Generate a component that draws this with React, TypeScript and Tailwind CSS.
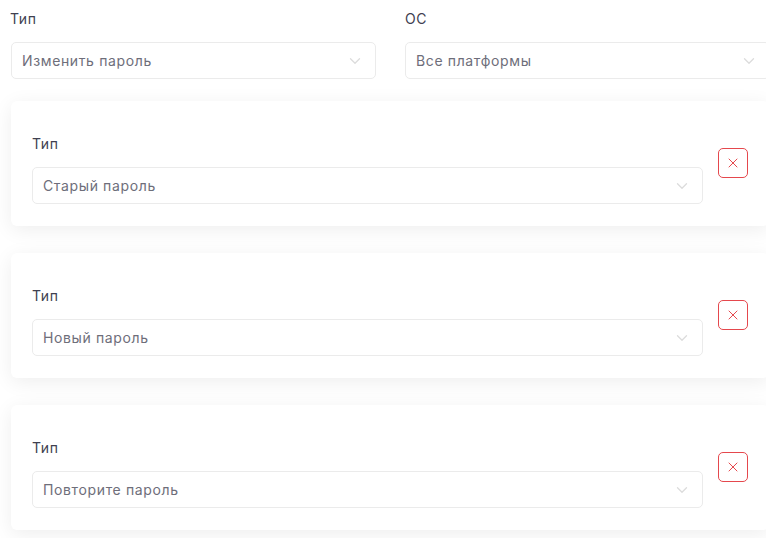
import { ChevronDown, X } from "lucide-react";

type SelectProps = {
  value: string;
};

function Select({ value }: SelectProps) {
  return (
    <div className="flex h-[37px] w-full items-center justify-between rounded-[5px] border border-[#ebebeb] bg-white pl-[10px] pr-[11px]">
      <span className="text-[14px] tracking-[0.045em] text-[#6e6e7a]">{value}</span>
      <ChevronDown className="h-[18px] w-[18px] text-[#dcdcdc]" strokeWidth={1.75} aria-hidden />
    </div>
  );
}

const rows = ["Старый пароль", "Новый пароль", "Повторите пароль"];

export default function App() {
  return (
    <div
      className="min-h-[538px] w-[766px] overflow-hidden bg-white"
      style={{ fontFamily: "Inter, 'Noto Sans', sans-serif" }}
    >
      <div className="grid w-[770px] grid-cols-2 gap-x-[29px] pl-[11px] pt-[9px]">
        <div>
          <label className="-ml-px block h-5 text-[14px] leading-5 tracking-[0.04em] text-[#404050]">
            Тип
          </label>
          <div className="mt-[13px]">
            <Select value="Изменить пароль" />
          </div>
        </div>
        <div>
          <label className="block h-5 text-[14px] leading-5 tracking-[0.04em] text-[#404050]">
            ОС
          </label>
          <div className="mt-[13px]">
            <Select value="Все платформы" />
          </div>
        </div>
      </div>

      <div className="mt-[22px] flex w-[769px] flex-col gap-[27px] pl-[11px]">
        {rows.map((row) => (
          <div
            key={row}
            className="flex h-[125px] items-start gap-[15px] rounded-[6px] bg-white pl-[21px] pr-[21px] pt-[33px] shadow-[0_4px_20px_rgba(0,0,0,0.07)]"
          >
            <div className="flex-1">
              <label className="block h-5 text-[14px] leading-5 tracking-[0.04em] text-[#404050]">
                Тип
              </label>
              <div className="mt-[13px]">
                <Select value={row} />
              </div>
            </div>
            <button
              type="button"
              className="mt-[14px] flex h-[30px] w-[30px] items-center justify-center rounded-[5px] border border-[#e5484d] bg-white"
            >
              <X className="h-4 w-4 text-[#e5484d]" strokeWidth={1.5} aria-hidden />
            </button>
          </div>
        ))}
      </div>
    </div>
  );
}
